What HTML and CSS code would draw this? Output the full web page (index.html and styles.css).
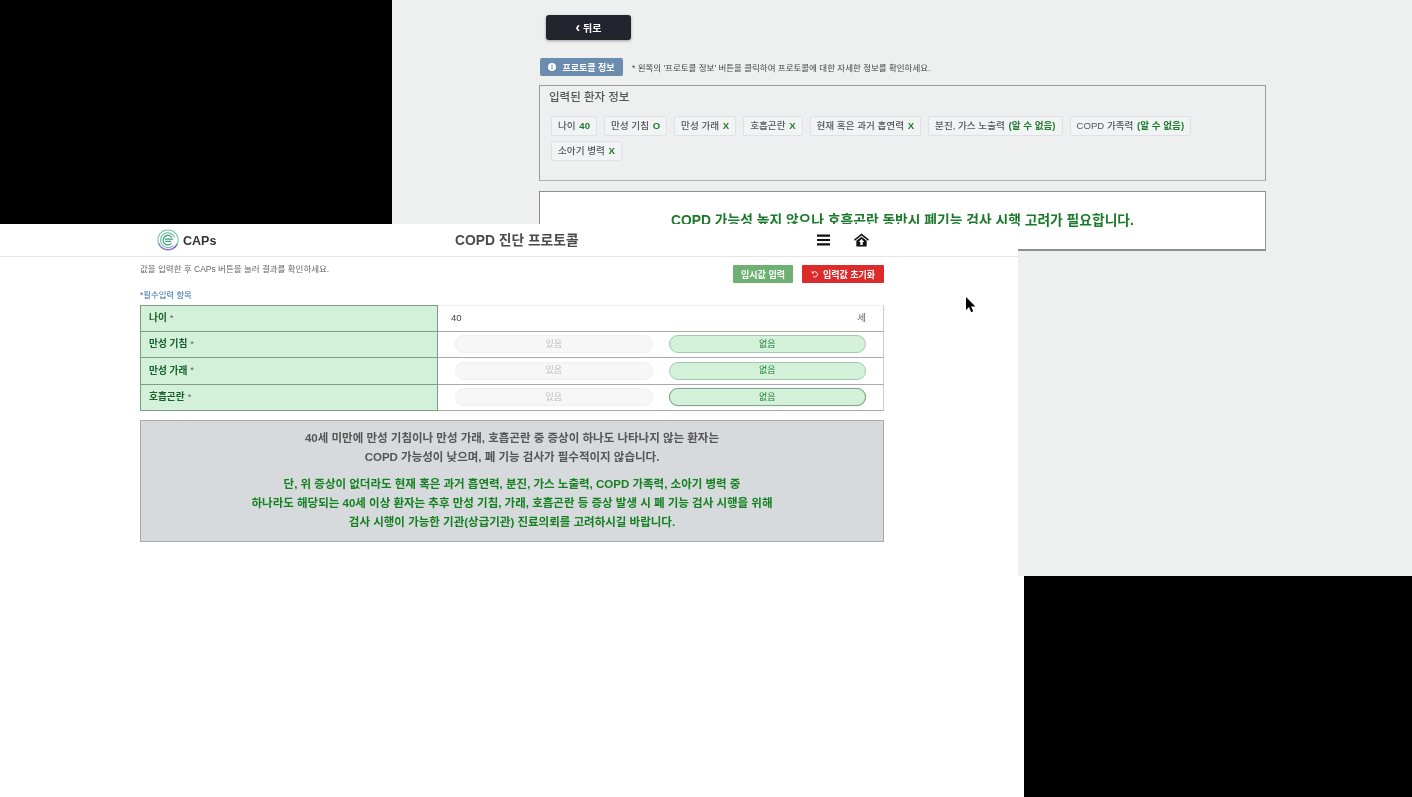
FILE: index.html
```html
<!DOCTYPE html>
<html lang="ko">
<head>
    <meta charset="UTF-8">
    <meta name="viewport" content="width=device-width, initial-scale=1.0">
    <title>COPD 진단 프로토콜</title>
    <link rel="stylesheet" href="styles.css">
</head>
<body>
    <!-- back window: result page -->
    <div class="window window-back">
        <button class="back-btn"><span class="chev">&#8249;</span> 뒤로</button>

        <div class="info-row">
            <button class="info-btn">
                <svg class="info-icon" viewBox="0 0 16 16"><circle cx="8" cy="8" r="8" fill="#fff"/><rect x="6.8" y="7" width="2.4" height="5.5" fill="#6b8cae"/><rect x="6.8" y="3.6" width="2.4" height="2.2" fill="#6b8cae"/></svg>
                프로토콜 정보
            </button>
            <span class="info-note">* 왼쪽의 '프로토콜 정보' 버튼을 클릭하여 프로토콜에 대한 자세한 정보를 확인하세요.</span>
        </div>

        <div class="patient-box">
            <div class="patient-title">입력된 환자 정보</div>
            <div class="chips">
                <span class="chip">나이 <b>40</b></span>
                <span class="chip">만성 기침 <b>O</b></span>
                <span class="chip">만성 가래 <b>X</b></span>
                <span class="chip">호흡곤란 <b>X</b></span>
                <span class="chip">현재 혹은 과거 흡연력 <b>X</b></span>
                <span class="chip">분진, 가스 노출력 <b>(알 수 없음)</b></span>
                <span class="chip">COPD 가족력 <b>(알 수 없음)</b></span>
                <span class="chip">소아기 병력 <b>X</b></span>
            </div>
        </div>

        <div class="result-card">COPD 가능성 높지 않으나 호흡곤란 동반시 폐기능 검사 시행 고려가 필요합니다.</div>
    </div>

    <!-- front window: input page -->
    <div class="window window-front">
        <header class="topbar">
            <div class="brand">
                <svg class="logo" viewBox="0 0 24 24" fill="none" stroke-linecap="round">
                    <circle cx="12" cy="12" r="11" stroke="#5fb89a" stroke-width="1.1" stroke-dasharray="1.6 1.1"/>
                    <path d="M2.2 16a11 11 0 0 0 17 4" stroke="#a868c8" stroke-width="1.3" stroke-dasharray="2.5 1"/>
                    <path d="M21.5 17a11 11 0 0 1-3 3.5" stroke="#7a58b8" stroke-width="1.4"/>
                    <path d="M19 8.5a8 8 0 1 0-2 10" stroke="#6cc0a4" stroke-width="1.3"/>
                    <path d="M16 9a5.2 5.2 0 1 0-.6 7" stroke="#3a9c80" stroke-width="1.3"/>
                    <path d="M9 11h8M9.5 13.5h5.5" stroke="#3a9c80" stroke-width="1.2"/>
                </svg>
                <span class="brand-name">CAPs</span>
            </div>
            <div class="page-title">COPD 진단 프로토콜</div>
            <div class="top-icons">
                <svg class="menu-icon" viewBox="0 0 14 12"><path d="M0 .5h13v2.2H0zM0 4.9h13v2.2H0zM0 9.3h13v2.2H0z" fill="#111"/></svg>
                <svg class="home-icon" viewBox="0 0 16 14"><path d="M8 0 0 6.4l1 1.3L8 2.2l7 5.5 1-1.3z" fill="#111"/><path fill-rule="evenodd" d="M8 3.5 2.5 7.9V14h11V7.9zM8 6l3 3H9.3v3.4H6.7V9H5z" fill="#111"/></svg>
            </div>
        </header>

        <div class="content">
            <div class="action-row">
                <p class="hint">값을 입력한 후 CAPs 버튼을 눌러 결과를 확인하세요.</p>
                <div class="actions">
                    <button class="btn-temp">임시값 입력</button>
                    <button class="btn-reset">
                        <svg class="reset-icon" viewBox="0 0 12 12" fill="none" stroke="#fff" stroke-width="1.3"><path d="M2.5 4.2A4 4 0 1 1 3 9.5"/><path d="M1.8 1.6v2.9h2.9" stroke-width="1.1"/></svg>
                        입력값 초기화
                    </button>
                </div>
            </div>
            <div class="required">*필수입력 항목</div>

            <div class="form-table">
                <div class="row row-first">
                    <div class="label">나이 <i>*</i></div>
                    <div class="value value-age"><span>40</span><span class="unit">세</span></div>
                </div>
                <div class="row">
                    <div class="label">만성 기침 <i>*</i></div>
                    <div class="value"><button class="opt">있음</button><button class="opt opt-on">없음</button></div>
                </div>
                <div class="row">
                    <div class="label">만성 가래 <i>*</i></div>
                    <div class="value"><button class="opt">있음</button><button class="opt opt-on">없음</button></div>
                </div>
                <div class="row">
                    <div class="label">호흡곤란 <i>*</i></div>
                    <div class="value"><button class="opt">있음</button><button class="opt opt-on opt-focus">없음</button></div>
                </div>
            </div>

            <div class="notice">
                <p class="notice-gray">40세 미만에 만성 기침이나 만성 가래, 호흡곤란 중 증상이 하나도 나타나지 않는 환자는<br>COPD 가능성이 낮으며, 폐 기능 검사가 필수적이지 않습니다.</p>
                <p class="notice-green">단, 위 증상이 없더라도 현재 혹은 과거 흡연력, 분진, 가스 노출력, COPD 가족력, 소아기 병력 중<br>하나라도 해당되는 40세 이상 환자는 추후 만성 기침, 가래, 호흡곤란 등 증상 발생 시 폐 기능 검사 시행을 위해<br>검사 시행이 가능한 기관(상급기관) 진료의뢰를 고려하시길 바랍니다.</p>
            </div>
        </div>
    </div>
    <div class="window window-bottom"></div>

    <svg class="cursor" viewBox="0 0 10 16"><path d="M0 0v13l3-3 2.2 5.2 2-.9L5 9.4h4.4z" fill="#000"/></svg>
</body>
</html>
```

FILE: styles.css
```css
html, body {
    margin: 0;
    height: 100%;
}
html {
    background-color: #000;
}
body {
    position: relative;
    width: 1412px;
    height: 797px;
    overflow: hidden;
    font-family: "Liberation Sans", "Noto Sans CJK KR", sans-serif;
    color: #444;
}
p {
    margin: 0;
}
button {
    font-family: inherit;
    border: none;
    padding: 0;
}

/* the windows sit on a free desktop, the capture is slightly soft */
.window {
    position: absolute;
    box-sizing: border-box;
    filter: blur(0.35px);
}
.window-back {
    left: 392px;
    top: 0;
    width: 1020px;
    height: 576px;
    padding: 15px 146px 0 147px;
    background-color: #eef0f0;
    overflow: hidden;
}
.window-front {
    left: 0;
    top: 224px;
    width: 1018px;
    height: 352px;
    background-color: #fff;
}
.window-bottom {
    left: 0;
    top: 576px;
    width: 1024px;
    height: 221px;
    background-color: #fff;
}
.cursor {
    position: absolute;
    left: 966px;
    top: 297px;
    width: 10px;
    height: 16px;
}

/* back window */
.back-btn {
    display: block;
    width: 85px;
    height: 25px;
    margin-left: 7px;
    background-color: #23252e;
    color: #fff;
    font-size: 10px;
    font-weight: 700;
    border-radius: 3px;
    box-shadow: 0 1px 3px rgba(0, 0, 0, 0.35);
}
.chev {
    font-size: 14px;
    line-height: 10px;
}
.info-row {
    display: flex;
    align-items: center;
    gap: 9px;
    margin: 18px 0 0 1px;
}
.info-btn {
    display: flex;
    align-items: center;
    justify-content: center;
    gap: 6px;
    width: 83px;
    height: 18px;
    background-color: #6b8cae;
    color: #fff;
    font-size: 9px;
    font-weight: 700;
    border-radius: 2px;
}
.info-icon {
    width: 8px;
    height: 8px;
}
.info-note {
    font-size: 8.5px;
    color: #444;
}
.patient-box {
    box-sizing: border-box;
    height: 96px;
    margin-top: 9px;
    padding: 4px 11px 0 9px;
    border: 1px solid #9a9a9a;
    border-bottom-color: #b0b0b0;
}
.patient-title {
    font-size: 11.5px;
    font-weight: 500;
    line-height: 14px;
    color: #555;
}
.chips {
    display: flex;
    flex-wrap: wrap;
    gap: 5px 7px;
    margin: 12px 0 0 2px;
}
.chip {
    box-sizing: border-box;
    height: 20px;
    padding: 0 6px;
    font-size: 9.6px;
    font-weight: 500;
    line-height: 18px;
    color: #555;
    background-color: #f1f3f4;
    border: 1px solid #dfe2e4;
    border-radius: 2px;
}
.chip b {
    color: #1f7a2e;
    margin-left: 1px;
}
.result-card {
    box-sizing: border-box;
    height: 60px;
    margin-top: 10px;
    padding-top: 20px;
    background-color: #fff;
    border: 1px solid #8f8f8f;
    border-bottom-width: 2px;
    color: #1a7a2a;
    font-size: 13.8px;
    font-weight: 700;
    line-height: 17px;
    text-align: center;
}

/* front window */
.topbar {
    display: flex;
    align-items: center;
    box-sizing: border-box;
    height: 33px;
    padding: 0 0 0 157px;
    border-bottom: 1px solid #e6e6e6;
}
.brand {
    display: flex;
    align-items: center;
    gap: 4px;
    width: 298px;
}
.logo {
    width: 22px;
    height: 22px;
}
.brand-name {
    padding-top: 1px;
    font-size: 12.5px;
    font-weight: 700;
    color: #333;
}
.page-title {
    width: 125px;
    padding-bottom: 3px;
    font-size: 13.8px;
    font-weight: 700;
    color: #4a4a4a;
    white-space: nowrap;
}
.top-icons {
    display: flex;
    align-items: center;
    gap: 23px;
    margin-left: 237px;
}
.menu-icon {
    width: 14px;
    height: 12px;
}
.home-icon {
    width: 15px;
    height: 14px;
}
.content {
    padding: 0 134px 0 140px;
}
.action-row {
    display: flex;
    justify-content: space-between;
    height: 22px;
    padding-top: 7px;
}
.hint {
    margin-top: 0;
    font-size: 8.5px;
    line-height: 10px;
    color: #666;
}
.actions {
    display: flex;
    gap: 9px;
    margin-top: 1px;
}
.btn-temp,
.btn-reset {
    display: flex;
    align-items: center;
    justify-content: center;
    height: 18px;
    color: #fff;
    font-size: 9px;
    font-weight: 700;
    border-radius: 1px;
}
.btn-temp {
    width: 60px;
    background-color: #6fb073;
}
.btn-reset {
    gap: 4px;
    width: 82px;
    background-color: #dc2b2b;
}
.reset-icon {
    width: 8px;
    height: 8px;
}
.required {
    margin-top: 4px;
    font-size: 8.4px;
    line-height: 10px;
    color: #2a6db0;
}
.form-table {
    margin-top: 5px;
}
.row {
    display: grid;
    grid-template-columns: 298px 1fr;
    height: 26.5px;
}
.label {
    box-sizing: border-box;
    display: flex;
    align-items: center;
    gap: 3px;
    padding: 0 0 2px 8px;
    background-color: #d3f0d8;
    border: 1px solid #7f9a85;
    border-top-width: 0;
    color: #17602c;
    font-size: 9.7px;
    font-weight: 700;
}
.row-first .label {
    border-top-width: 1px;
}
.label i {
    font-style: normal;
    font-weight: 400;
    color: #666;
}
.value {
    box-sizing: border-box;
    display: flex;
    align-items: center;
    gap: 16px;
    padding: 0 17px;
    border-bottom: 1px solid #aaa;
    border-right: 1px solid #ccc;
}
.value-age {
    justify-content: space-between;
    padding: 0 17px 2px 13px;
    font-size: 9.5px;
    color: #444;
    border-top: 1px solid #eee;
}
.unit {
    color: #666;
}
.opt {
    flex: 1;
    height: 18px;
    padding-bottom: 2px;
    background-color: #f7f7f7;
    color: #bbb;
    font-size: 9px;
    border: 1px solid #f0f0f0;
    border-radius: 9px;
}
.opt-on {
    background-color: #d3f0d8;
    color: #1f7a3a;
    border-color: #a5c9ad;
}
.opt-focus {
    border: 1px solid #83a58b;
    box-shadow: 0 0 1px #83a58b;
}
.notice {
    box-sizing: border-box;
    height: 122px;
    margin-top: 9px;
    padding: 8px 0 0;
    background-color: #d6dadd;
    border: 1px solid #a8acae;
    font-size: 11.5px;
    font-weight: 700;
    line-height: 19px;
    text-align: center;
}
.notice-gray {
    color: #555;
}
.notice-green {
    margin-top: 8px;
    color: #15801f;
}
```
